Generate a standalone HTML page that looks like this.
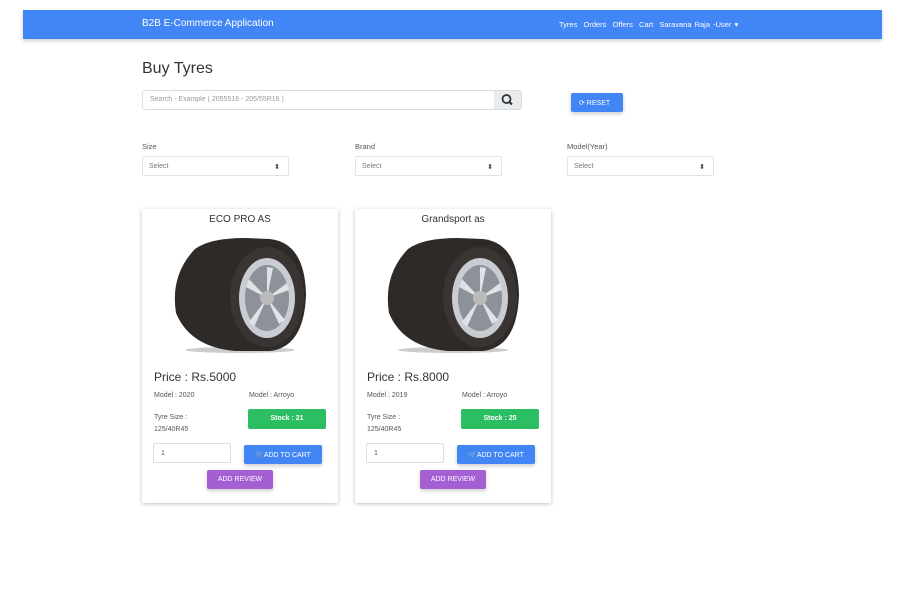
<!DOCTYPE html>
<html><head><style>
*{box-sizing:border-box;margin:0;padding:0}
body{width:905px;height:595px;background:#fff;font-family:"Liberation Sans",sans-serif;color:#4f4f4f;position:relative;overflow:hidden}
.nav{position:absolute;left:23px;top:10px;width:859px;height:29px;background:#4285f4;box-shadow:0 2px 4px rgba(0,0,0,.2);color:#fff}
.nav .b{position:absolute;left:119px;top:8px;font-size:10px}
.nav .r{position:absolute;left:536px;top:10px;font-size:7.5px;word-spacing:1px}
h1{position:absolute;left:142px;top:60px;font-size:16px;font-weight:normal;color:#333}
.search{position:absolute;left:142px;top:90px;width:380px;height:20px;border:1px solid #ddd;border-radius:3px;font-size:7px;color:#999;padding:5px 7px}
.sb{position:absolute;right:0;top:0;width:27px;height:18px;background:#e9ecef}
.reset{position:absolute;left:571px;top:93px;width:52px;height:19px;background:#4285f4;border-radius:2px;color:#fff;font-size:7px;padding:6px 0 0 8px;box-shadow:0 2px 4px rgba(0,0,0,.2)}
.lbl{position:absolute;top:142px;font-size:7.5px;color:#555}
.sel{position:absolute;top:156px;width:147px;height:20px;border:1px solid #e3e3e3;border-radius:2px;font-size:7px;color:#777;padding:6px 6px}
.sel:after{content:"⬍";position:absolute;right:8px;top:6px;font-size:7px;color:#444}
.card{position:absolute;top:209px;width:196px;height:294px;box-shadow:0 1px 4px rgba(0,0,0,.25);border-radius:2px}
.t{position:absolute;top:5px;width:100%;text-align:center;font-size:10px;color:#333}
.tyre{position:absolute;left:28px;top:26px}
.p{position:absolute;left:12px;top:161px;font-size:12px;color:#333}
.s{position:absolute;font-size:7px;color:#555}
.stock{position:absolute;left:106px;top:200px;width:78px;height:20px;background:#2bbe63;color:#fff;font-size:7px;font-weight:bold;text-align:center;padding-top:6px;border-radius:2px}
.qty{position:absolute;left:11px;top:234px;width:78px;height:20px;border:1px solid #ddd;border-radius:2px;font-size:7px;padding:6px 7px;color:#555}
.cart{position:absolute;left:102px;top:236px;width:78px;height:19px;background:#4285f4;color:#fff;font-size:7px;text-align:center;padding-top:6px;border-radius:2px;box-shadow:0 2px 4px rgba(0,0,0,.2)}
.rev{position:absolute;left:65px;top:261px;width:66px;height:19px;background:#a45fd3;color:#fff;font-size:7px;text-align:center;padding-top:6px;border-radius:2px;box-shadow:0 2px 4px rgba(0,0,0,.2)}
</style></head><body>
<div class="nav"><span class="b">B2B E-Commerce Application</span><span class="r">Tyres &nbsp;Orders &nbsp;Offers &nbsp;Cart &nbsp;Saravana Raja -User ▾</span></div>
<h1>Buy Tyres</h1>
<div class="search">Search - Example ( 2055516 - 205/55R16 )<div class="sb"><svg width="27" height="18"><circle cx="12.5" cy="8" r="4" fill="none" stroke="#333" stroke-width="1.8"/><line x1="15.5" y1="11" x2="18" y2="13.5" stroke="#333" stroke-width="2"/></svg></div></div>
<div class="reset">⟳ RESET</div>
<div class="lbl" style="left:142px">Size</div><div class="lbl" style="left:355px">Brand</div><div class="lbl" style="left:567px">Model(Year)</div>
<div class="sel" style="left:142px">Select</div><div class="sel" style="left:355px">Select</div><div class="sel" style="left:567px">Select</div>

<div class="card" style="left:142px">
<div class="t">ECO PRO AS</div>
<svg class="tyre" width="140" height="120" viewBox="0 0 140 120"><ellipse cx="70" cy="115" rx="55" ry="3" fill="#ccc"/><path d="M25 14 Q40 3 75 3 L100 4 Q135 8 136 60 Q134 112 100 116 L65 116 Q20 112 6 78 Q0 40 25 14Z" fill="#2e2a28"/><ellipse cx="97" cy="62" rx="37" ry="50" fill="#3a3532"/><ellipse cx="97" cy="63" rx="28" ry="40" fill="#c9ccd2"/><ellipse cx="97" cy="63" rx="22" ry="33" fill="#8d9198"/><path d="M97 63 L97 32 L103 33Z M97 63 L117 48 L119 55Z M97 63 L115 85 L109 89Z M97 63 L84 92 L79 87Z M97 63 L76 52 L79 44Z" fill="#dfe2e6"/><circle cx="97" cy="63" r="7" fill="#bbb"/></svg>
<div class="p">Price : Rs.5000</div>
<div class="s" style="left:12px;top:183px">Model : 2020</div><div class="s" style="left:107px;top:183px">Model : Arroyo</div>
<div class="s" style="left:12px;top:203px;line-height:12px">Tyre Size :<br>125/40R45</div>
<div class="stock">Stock : 21</div>
<div class="qty">1</div><div class="cart">🛒ADD TO CART</div><div class="rev">ADD REVIEW</div>
</div>

<div class="card" style="left:355px">
<div class="t">Grandsport as</div>
<svg class="tyre" width="140" height="120" viewBox="0 0 140 120"><ellipse cx="70" cy="115" rx="55" ry="3" fill="#ccc"/><path d="M25 14 Q40 3 75 3 L100 4 Q135 8 136 60 Q134 112 100 116 L65 116 Q20 112 6 78 Q0 40 25 14Z" fill="#2e2a28"/><ellipse cx="97" cy="62" rx="37" ry="50" fill="#3a3532"/><ellipse cx="97" cy="63" rx="28" ry="40" fill="#c9ccd2"/><ellipse cx="97" cy="63" rx="22" ry="33" fill="#8d9198"/><path d="M97 63 L97 32 L103 33Z M97 63 L117 48 L119 55Z M97 63 L115 85 L109 89Z M97 63 L84 92 L79 87Z M97 63 L76 52 L79 44Z" fill="#dfe2e6"/><circle cx="97" cy="63" r="7" fill="#bbb"/></svg>
<div class="p">Price : Rs.8000</div>
<div class="s" style="left:12px;top:183px">Model : 2019</div><div class="s" style="left:107px;top:183px">Model : Arroyo</div>
<div class="s" style="left:12px;top:203px;line-height:12px">Tyre Size :<br>125/40R45</div>
<div class="stock">Stock : 25</div>
<div class="qty">1</div><div class="cart">🛒ADD TO CART</div><div class="rev">ADD REVIEW</div>
</div>
</body></html>
